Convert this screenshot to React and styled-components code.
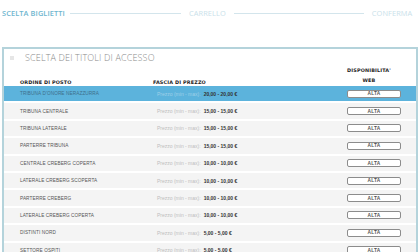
import React from 'react';
import styled, { createGlobalStyle } from 'styled-components';

const Global = createGlobalStyle`
  html, body {
    margin: 0;
    padding: 0;
    background: #ffffff;
    overflow: hidden;
  }
  body {
    font-family: "Liberation Sans", Arial, sans-serif;
    -webkit-font-smoothing: antialiased;
  }
`;

const Steps = styled.div`
  display: flex;
  align-items: center;
  height: 26px;
  padding: 0 0 0 2px;
  white-space: nowrap;
`;

const Step = styled.span`
  font-family: "Open Sans", sans-serif;
  font-size: 7.4px;
  font-weight: ${p => (p.active ? 600 : 400)};
  color: ${p => (p.active ? '#6fb6cf' : '#c9e1ea')};
  letter-spacing: 0.1px;
`;

const StepLine = styled.span`
  display: block;
  flex: none;
  width: ${p => p.w}px;
  height: 1px;
  margin: 0 ${p => p.right}px 0 ${p => p.left}px;
  background: #d3e5ec;
`;

const Panel = styled.div`
  margin: 21px 2px 0 2px;
  border: 2px solid #b4d3db;
  border-bottom: none;
  height: 203px;
  overflow: hidden;
  background: #ffffff;
`;

const Title = styled.div`
  display: flex;
  align-items: center;
  height: 17px;
  padding-left: 6px;
  font-family: "Open Sans", sans-serif;
  font-size: 9px;
  font-weight: 300;
  color: #8a8a8a;
  letter-spacing: 0.15px;

  &::before {
    content: '';
    width: 4px;
    height: 4px;
    background: #e6e6e6;
    margin-right: 11px;
  }
`;

const Row = styled.div`
  display: grid;
  grid-template-columns: 133px 1fr 90px;
  align-items: center;
  padding-left: 16px;
`;

const HeadRow = styled(Row)`
  height: 20px;
  align-items: end;
  padding-bottom: 4px;
  box-sizing: border-box;
  font-family: "DejaVu Sans", Verdana, sans-serif;
  font-size: 4.9px;
  font-weight: 700;
  color: #222;
  letter-spacing: 0.15px;
`;

const HeadCell = styled.div`
  text-align: ${p => (p.center ? 'center' : 'left')};
  line-height: ${p => (p.center ? '9.5px' : '6px')};
  padding-right: ${p => (p.center ? '4px' : '0')};
`;

const BodyRow = styled(Row)`
  height: 15.4px;
  margin-bottom: 2px;
  background: ${p => (p.selected ? '#5cb3dc' : '#f4f4f4')};
  font-size: 4.7px;
  color: ${p => (p.selected ? '#3f6f8a' : '#555')};
`;

const Name = styled.div`
  letter-spacing: 0.1px;
`;

const Price = styled.div`
  padding-left: 4px;
  font-size: 5px;
  color: ${p => (p.selected ? '#9fd0e8' : '#bdbdbd')};
`;

const Amount = styled.b`
  margin-left: 3px;
  font-weight: 700;
  color: #333;
`;

const Avail = styled.div`
  display: flex;
  justify-content: center;
  padding-left: 6px;
`;

const Badge = styled.span`
  display: flex;
  align-items: center;
  justify-content: center;
  width: 52px;
  height: 6px;
  border: 1px solid #8c8c8c;
  border-radius: 2px;
  background: #fff;
  font-size: 4.8px;
  font-weight: 700;
  color: #555;
  letter-spacing: 0.2px;
`;

const rows = [
  ['TRIBUNA D\'ONORE NERAZZURRA', '20,00 - 20,00 €'],
  ['TRIBUNA CENTRALE', '15,00 - 15,00 €'],
  ['TRIBUNA LATERALE', '15,00 - 15,00 €'],
  ['PARTERRE TRIBUNA', '15,00 - 15,00 €'],
  ['CENTRALE CREBERG COPERTA', '10,00 - 10,00 €'],
  ['LATERALE CREBERG SCOPERTA', '10,00 - 10,00 €'],
  ['PARTERRE CREBERG', '10,00 - 10,00 €'],
  ['LATERALE CREBERG COPERTA', '10,00 - 10,00 €'],
  ['DISTINTI NORD', '5,00 - 5,00 €'],
  ['SETTORE OSPITI', '5,00 - 5,00 €'],
];

export default function App() {
  return (
    <>
      <Global />
      <Steps>
        <Step active>SCELTA BIGLIETTI</Step>
        <StepLine w={111} left={5} right={8} />
        <Step>CARRELLO</Step>
        <StepLine w={130} left={8} right={8} />
        <Step>CONFERMA</Step>
      </Steps>
      <Panel>
        <Title>SCELTA DEI TITOLI DI ACCESSO</Title>
        <HeadRow>
          <HeadCell>ORDINE DI POSTO</HeadCell>
          <HeadCell>FASCIA DI PREZZO</HeadCell>
          <HeadCell center>DISPONIBILITA'<br />WEB</HeadCell>
        </HeadRow>
        {rows.map(([name, amount], i) => (
          <BodyRow key={name} selected={i === 0}>
            <Name>{name}</Name>
            <Price selected={i === 0}>
              Prezzo (min - max):<Amount>{amount}</Amount>
            </Price>
            <Avail>
              <Badge>ALTA</Badge>
            </Avail>
          </BodyRow>
        ))}
      </Panel>
    </>
  );
}
